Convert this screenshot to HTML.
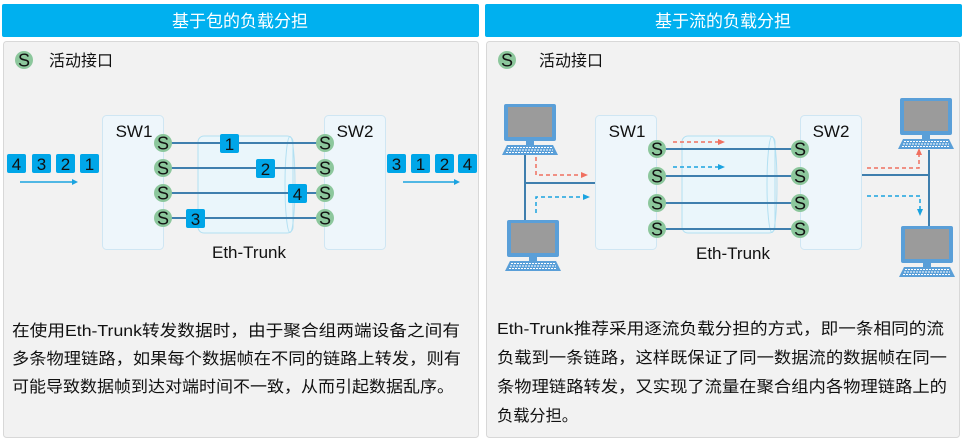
<!DOCTYPE html>
<html><head><meta charset="utf-8"><style>
html,body{margin:0;padding:0;background:#fff;}
body{width:965px;height:442px;overflow:hidden;}
svg{display:block;font-family:"Liberation Sans","Noto Sans CJK SC",sans-serif;}
</style></head><body>
<svg width="965" height="442" viewBox="0 0 965 442" xmlns="http://www.w3.org/2000/svg">
<defs>
<g id="pc">
<rect x="0" y="0" width="52" height="37" rx="2" fill="#5a9fd8"/>
<rect x="4" y="3" width="44" height="30" fill="#9b9b9b"/>
<rect x="22" y="37" width="8" height="4" fill="#5a9fd8"/>
<path d="M3 41 H49 L54 51 H-2 Z" fill="#5a9fd8"/>
<path d="M4 43.5 H48 M3 46 H49 M2 48.5 H50" stroke="#fff" stroke-width="1" stroke-dasharray="2 1"/>
</g>
<g id="s"><circle r="9" fill="#8cc79c"/><text y="6.5" text-anchor="middle" font-size="18" fill="#111">S</text></g>
</defs>
<rect x="2" y="4" width="477" height="33" rx="2" fill="#00b0ef"/>
<text x="240" y="27" text-anchor="middle" font-size="17" fill="#fff">基于包的负载分担</text>
<rect x="485" y="4" width="477" height="33" rx="2" fill="#00b0ef"/>
<text x="723" y="27" text-anchor="middle" font-size="17" fill="#fff">基于流的负载分担</text>
<rect x="3.5" y="41.5" width="475" height="396" rx="3" fill="#f2f2f2" stroke="#d8d8d8"/>
<rect x="486.5" y="41.5" width="473" height="396" rx="3" fill="#f2f2f2" stroke="#d8d8d8"/>

<!-- LEFT -->
<use href="#s" x="24" y="60"/>
<text x="49" y="66" font-size="16" fill="#111">活动接口</text>
<rect x="102.5" y="115.5" width="61" height="134" rx="4" fill="#eef6fb" stroke="#cfe6f3"/>
<rect x="324.5" y="115.5" width="61" height="134" rx="4" fill="#eef6fb" stroke="#cfe6f3"/>
<text x="134" y="137" text-anchor="middle" font-size="17" fill="#111">SW1</text>
<text x="355" y="137" text-anchor="middle" font-size="17" fill="#111">SW2</text>
<rect x="198" y="136" width="95" height="97" rx="6" fill="#eaf6fb" stroke="#b3e0f2" stroke-width="1"/>
<ellipse cx="290" cy="184.5" rx="5" ry="48" fill="none" stroke="#b3e0f2"/>
<g stroke="#3f7fae" stroke-width="2">
<line x1="163" y1="143" x2="324" y2="143"/><line x1="163" y1="168" x2="324" y2="168"/>
<line x1="163" y1="193" x2="324" y2="193"/><line x1="163" y1="218" x2="324" y2="218"/>
</g>
<use href="#s" x="163" y="143"/><use href="#s" x="163" y="168"/><use href="#s" x="163" y="193"/><use href="#s" x="163" y="218"/>
<use href="#s" x="325" y="143"/><use href="#s" x="325" y="168"/><use href="#s" x="325" y="193"/><use href="#s" x="325" y="218"/>
<g font-size="17" fill="#111" text-anchor="middle">
<rect x="220" y="134" width="19" height="19" rx="2" fill="#00a6e8"/><text x="229.5" y="150">1</text>
<rect x="256" y="159" width="19" height="19" rx="2" fill="#00a6e8"/><text x="265.5" y="175">2</text>
<rect x="288" y="184" width="19" height="19" rx="2" fill="#00a6e8"/><text x="297.5" y="200">4</text>
<rect x="186" y="209" width="19" height="19" rx="2" fill="#00a6e8"/><text x="195.5" y="225">3</text>
<rect x="7" y="154" width="19" height="19" rx="2" fill="#00a6e8"/><text x="16.5" y="170">4</text>
<rect x="32" y="154" width="19" height="19" rx="2" fill="#00a6e8"/><text x="41.5" y="170">3</text>
<rect x="56" y="154" width="19" height="19" rx="2" fill="#00a6e8"/><text x="65.5" y="170">2</text>
<rect x="80" y="154" width="19" height="19" rx="2" fill="#00a6e8"/><text x="89.5" y="170">1</text>
<rect x="387" y="154" width="19" height="19" rx="2" fill="#00a6e8"/><text x="396.5" y="170">3</text>
<rect x="411" y="154" width="19" height="19" rx="2" fill="#00a6e8"/><text x="420.5" y="170">1</text>
<rect x="435" y="154" width="19" height="19" rx="2" fill="#00a6e8"/><text x="444.5" y="170">2</text>
<rect x="458" y="154" width="19" height="19" rx="2" fill="#00a6e8"/><text x="467.5" y="170">4</text>
</g>
<g stroke="#1aa3e0" stroke-width="1.5" fill="#1aa3e0">
<line x1="20" y1="182" x2="74" y2="182"/><path d="M72 179 L78 182 L72 185Z" stroke="none"/>
<line x1="403" y1="182" x2="456" y2="182"/><path d="M454 179 L460 182 L454 185Z" stroke="none"/>
</g>
<text x="249" y="258" text-anchor="middle" font-size="17" fill="#111">Eth-Trunk</text>
<g font-size="16" fill="#111">
<text x="12" y="336" textLength="448" lengthAdjust="spacingAndGlyphs">在使用Eth-Trunk转发数据时，由于聚合组两端设备之间有</text>
<text x="12" y="364" textLength="449" lengthAdjust="spacingAndGlyphs">多条物理链路，如果每个数据帧在不同的链路上转发，则有</text>
<text x="12" y="392" textLength="442" lengthAdjust="spacingAndGlyphs">可能导致数据帧到达对端时间不一致，从而引起数据乱序。</text>
</g>

<!-- RIGHT -->
<use href="#s" x="507" y="60"/>
<text x="539" y="66" font-size="16" fill="#111">活动接口</text>
<use href="#pc" x="504" y="104"/>
<use href="#pc" x="507" y="220"/>
<use href="#pc" x="900" y="98"/>
<use href="#pc" x="901" y="226"/>
<g stroke="#3f7fae" stroke-width="2">
<line x1="525" y1="155" x2="525" y2="220"/><line x1="525" y1="183" x2="595" y2="183"/>
<line x1="862" y1="175" x2="929" y2="175"/><line x1="929" y1="150" x2="929" y2="226"/>
</g>
<rect x="595.5" y="115.5" width="61" height="134" rx="4" fill="#eef6fb" stroke="#cfe6f3"/>
<rect x="800.5" y="115.5" width="61" height="134" rx="4" fill="#eef6fb" stroke="#cfe6f3"/>
<text x="627" y="137" text-anchor="middle" font-size="17" fill="#111">SW1</text>
<text x="831" y="137" text-anchor="middle" font-size="17" fill="#111">SW2</text>
<rect x="682" y="136" width="93" height="97" rx="6" fill="#eaf6fb" stroke="#b3e0f2"/>
<ellipse cx="772" cy="184.5" rx="5" ry="48" fill="none" stroke="#b3e0f2"/>
<g stroke="#3f7fae" stroke-width="2">
<line x1="657" y1="149" x2="799" y2="149"/><line x1="657" y1="176" x2="799" y2="176"/>
<line x1="657" y1="203" x2="799" y2="203"/><line x1="657" y1="229" x2="799" y2="229"/>
</g>
<use href="#s" x="657" y="149"/><use href="#s" x="657" y="176"/><use href="#s" x="657" y="203"/><use href="#s" x="657" y="229"/>
<use href="#s" x="800" y="149"/><use href="#s" x="800" y="176"/><use href="#s" x="800" y="203"/><use href="#s" x="800" y="229"/>
<g fill="none" stroke-width="1.5" stroke-dasharray="4 3">
<path d="M536 157 V175 H582" stroke="#f07060"/>
<path d="M536 213 V197 H584" stroke="#1aa3e0"/>
<path d="M673 142 H719" stroke="#f07060"/>
<path d="M673 167 H719" stroke="#1aa3e0"/>
<path d="M867 168 H919 V153" stroke="#f07060"/>
<path d="M867 196 H920 V210" stroke="#1aa3e0"/>
</g>
<g stroke="none">
<path d="M581 172 L588 175 L581 178Z" fill="#f07060"/>
<path d="M583 194 L590 197 L583 200Z" fill="#1aa3e0"/>
<path d="M718 139 L725 142 L718 145Z" fill="#f07060"/>
<path d="M718 164 L725 167 L718 170Z" fill="#1aa3e0"/>
<path d="M916 155 L919 148 L922 155Z" fill="#f07060"/>
<path d="M917 209 L920 216 L923 209Z" fill="#1aa3e0"/>
</g>
<text x="733" y="259" text-anchor="middle" font-size="17" fill="#111">Eth-Trunk</text>
<g font-size="16" fill="#111">
<text x="497" y="334" textLength="447" lengthAdjust="spacingAndGlyphs">Eth-Trunk推荐采用逐流负载分担的方式，即一条相同的流</text>
<text x="497" y="363" textLength="450" lengthAdjust="spacingAndGlyphs">负载到一条链路，这样既保证了同一数据流的数据帧在同一</text>
<text x="497" y="392" textLength="450" lengthAdjust="spacingAndGlyphs">条物理链路转发，又实现了流量在聚合组内各物理链路上的</text>
<text x="497" y="421" textLength="81" lengthAdjust="spacingAndGlyphs">负载分担。</text>
</g>
</svg>
</body></html>
